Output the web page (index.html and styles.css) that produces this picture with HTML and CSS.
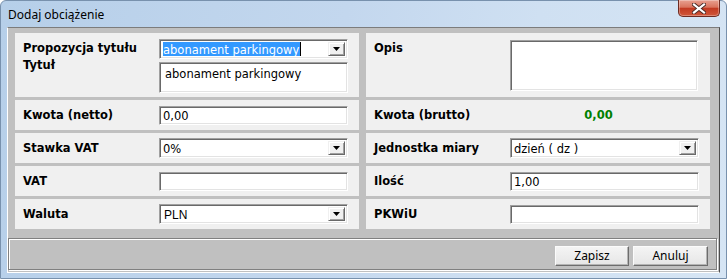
FILE: index.html
```html
<!DOCTYPE html>
<html lang="pl">
<head>
  <meta charset="UTF-8" />
  <title>Dodaj obciążenie</title>
  <link rel="stylesheet" href="styles.css">
</head>
<body>
  <div class="window">
    <div class="titlebar">
      <span class="title">Dodaj obciążenie</span>
      <div class="close">
        <svg width="14" height="11" viewBox="0 0 14 11">
          <path d="M2 1.5 L12 9.5 M12 1.5 L2 9.5" stroke="#4a2a26" stroke-width="4" stroke-linecap="square" fill="none"/>
          <path d="M2 1.5 L12 9.5 M12 1.5 L2 9.5" stroke="#fff" stroke-width="2.2" stroke-linecap="square" fill="none"/>
        </svg>
      </div>
    </div>

    <div class="client">
      <div class="grid">
        <div class="cell tall">
          <div class="labels">
            <div>Propozycja tytułu</div>
            <div>Tytuł</div>
          </div>
          <div class="fields">
            <div class="combo">
              <span class="combo-value"><span class="selected">abonament parkingowy</span></span>
              <span class="combo-btn"><svg width="7" height="4" viewBox="0 0 7 4"><polygon points="0,0 7,0 3.5,4" fill="#000"/></svg></span>
            </div>
            <div class="textbox area">abonament parkingowy</div>
          </div>
        </div>
        <div class="cell tall">
          <div class="label">Opis</div>
          <div class="textbox memo"></div>
        </div>

        <div class="cell">
          <div class="label">Kwota (netto)</div>
          <div class="textbox">0,00</div>
        </div>
        <div class="cell">
          <div class="label">Kwota (brutto)</div>
          <div class="value">0,00</div>
        </div>

        <div class="cell">
          <div class="label">Stawka VAT</div>
          <div class="combo">
            <span class="combo-value">0%</span>
            <span class="combo-btn"><svg width="7" height="4" viewBox="0 0 7 4"><polygon points="0,0 7,0 3.5,4" fill="#000"/></svg></span>
          </div>
        </div>
        <div class="cell">
          <div class="label">Jednostka miary</div>
          <div class="combo">
            <span class="combo-value">dzień ( dz )</span>
            <span class="combo-btn"><svg width="7" height="4" viewBox="0 0 7 4"><polygon points="0,0 7,0 3.5,4" fill="#000"/></svg></span>
          </div>
        </div>

        <div class="cell">
          <div class="label">VAT</div>
          <div class="textbox"></div>
        </div>
        <div class="cell">
          <div class="label">Ilość</div>
          <div class="textbox">1,00</div>
        </div>

        <div class="cell">
          <div class="label">Waluta</div>
          <div class="combo">
            <span class="combo-value plain">PLN</span>
            <span class="combo-btn"><svg width="7" height="4" viewBox="0 0 7 4"><polygon points="0,0 7,0 3.5,4" fill="#000"/></svg></span>
          </div>
        </div>
        <div class="cell">
          <div class="label">PKWiU</div>
          <div class="textbox"></div>
        </div>
      </div>

      <div class="buttonbar">
        <button class="btn">Zapisz</button>
        <button class="btn wide">Anuluj</button>
      </div>
    </div>
  </div>
</body>
</html>
```

FILE: styles.css
```css
* {
  box-sizing: border-box;
}

body {
  margin: 0;
  background: #fff;
  font-family: 'DejaVu Sans', Verdana, sans-serif;
}

/* okno */
.window {
  width: 727px;
  height: 279px;
  display: flex;
  flex-direction: column;
  border: 1px solid #7891ad;
  border-radius: 6px 6px 0 0;
  background: linear-gradient(100deg, #b6cfe9 0%, #c3d7ee 45%, #cfe0f2 70%, #d6e5f4 100%);
}

.titlebar {
  height: 26px;
  display: flex;
  align-items: flex-start;
  justify-content: space-between;
}

.title {
  font-family: 'Noto Sans', 'Open Sans', sans-serif;
  font-size: 12px;
  color: #000;
  padding: 5px 0 0 7px;
}

.close {
  width: 42px;
  height: 17px;
  margin: -1px 6px 0 0;
  border: 1px solid #6e2b22;
  border-top: none;
  border-radius: 0 0 5px 5px;
  background: linear-gradient(#e8a191 0%, #d9735d 45%, #c23a22 52%, #d0573a 100%);
  box-shadow: inset 0 0 0 1px rgba(255,255,255,0.3);
  display: flex;
  align-items: center;
  justify-content: center;
}

/* obszar klienta */
.client {
  flex: 1;
  margin: 0 6px 5px 6px;
  background: #c0c0c0;
  border: 1px solid;
  border-color: #7c7c7c #4d4d4d #ffffff #ffffff;
  padding-top: 5px;
}

.grid {
  margin-left: 7px;
  display: grid;
  grid-template-columns: 344px 344px;
  grid-template-rows: 64px 30px 30px 30px 30px;
  column-gap: 7px;
  row-gap: 3px;
}

.cell {
  background: #f0f0f0;
  display: flex;
  align-items: center;
  padding-left: 8px;
  font-size: 11.5px;
}

.cell.tall {
  align-items: flex-start;
  padding-top: 6px;
}

.label,
.labels {
  width: 136px;
  font-weight: bold;
  color: #000;
}

.labels {
  line-height: 17px;
  padding-top: 1px;
}

.cell.tall > .label {
  padding-top: 2px;
}

.fields {
  display: flex;
  flex-direction: column;
}

/* pola */
.textbox,
.combo {
  width: 189px;
  height: 19px;
  background: #fff;
  border: 1px solid;
  border-color: #a0a0a0 #fff #fff #a0a0a0;
  box-shadow: inset 1px 1px 0 #696969, inset -1px -1px 0 #e3e3e3;
  font-size: 11.5px;
  color: #000;
  padding: 2px 3px;
  line-height: 14px;
}

.textbox.area {
  height: 31px;
  padding: 4px 5px;
}

.textbox.memo {
  width: 188px;
  height: 51px;
  margin-top: 1px;
}

.combo {
  height: 20px;
  display: flex;
  padding: 2px 2px 2px 3px;
}

.fields .combo {
  margin-bottom: 3px;
}

.combo-value {
  flex: 1;
  line-height: 16px;
  white-space: nowrap;
  overflow: hidden;
}

.combo-value.plain {
  font-family: 'Liberation Sans', Arial, sans-serif;
  font-size: 12px;
  padding-left: 1px;
}

.selected {
  background: #3399ff;
  color: #fff;
  padding: 1px 1px 1px 0;
  border-right: 1px solid #000;
}

.combo-btn {
  width: 17px;
  background: #f0f0f0;
  border: 1px solid;
  border-color: #f0f0f0 #696969 #696969 #f0f0f0;
  box-shadow: inset 1px 1px 0 #fff, inset -1px -1px 0 #a0a0a0;
  display: flex;
  align-items: center;
  justify-content: center;
}

.value {
  width: 189px;
  text-align: center;
  padding-right: 12px;
  font-weight: bold;
  color: #008000;
}

/* przyciski */
.buttonbar {
  height: 32px;
  margin: 9px 2px 0 0;
  border: 1px solid #808080;
  box-shadow: inset 1px 1px 0 #fff, 1px 1px 0 #fff;
  display: flex;
  justify-content: flex-end;
  align-items: flex-start;
  padding: 7px 8px 0 0;
}

.btn {
  width: 74px;
  height: 20px;
  margin-left: 4px;
  font-family: 'Noto Sans', 'Open Sans', sans-serif;
  font-size: 12px;
  color: #000;
  padding: 0;
  line-height: 16px;
  background: linear-gradient(#f4f4f4, #e6e6e6);
  border: 1px solid;
  border-color: #fbfbfb #6d6d6d #6d6d6d #fbfbfb;
  box-shadow: inset -1px -1px 0 #b4b4b4;
}

.btn.wide {
  width: 75px;
}
```
